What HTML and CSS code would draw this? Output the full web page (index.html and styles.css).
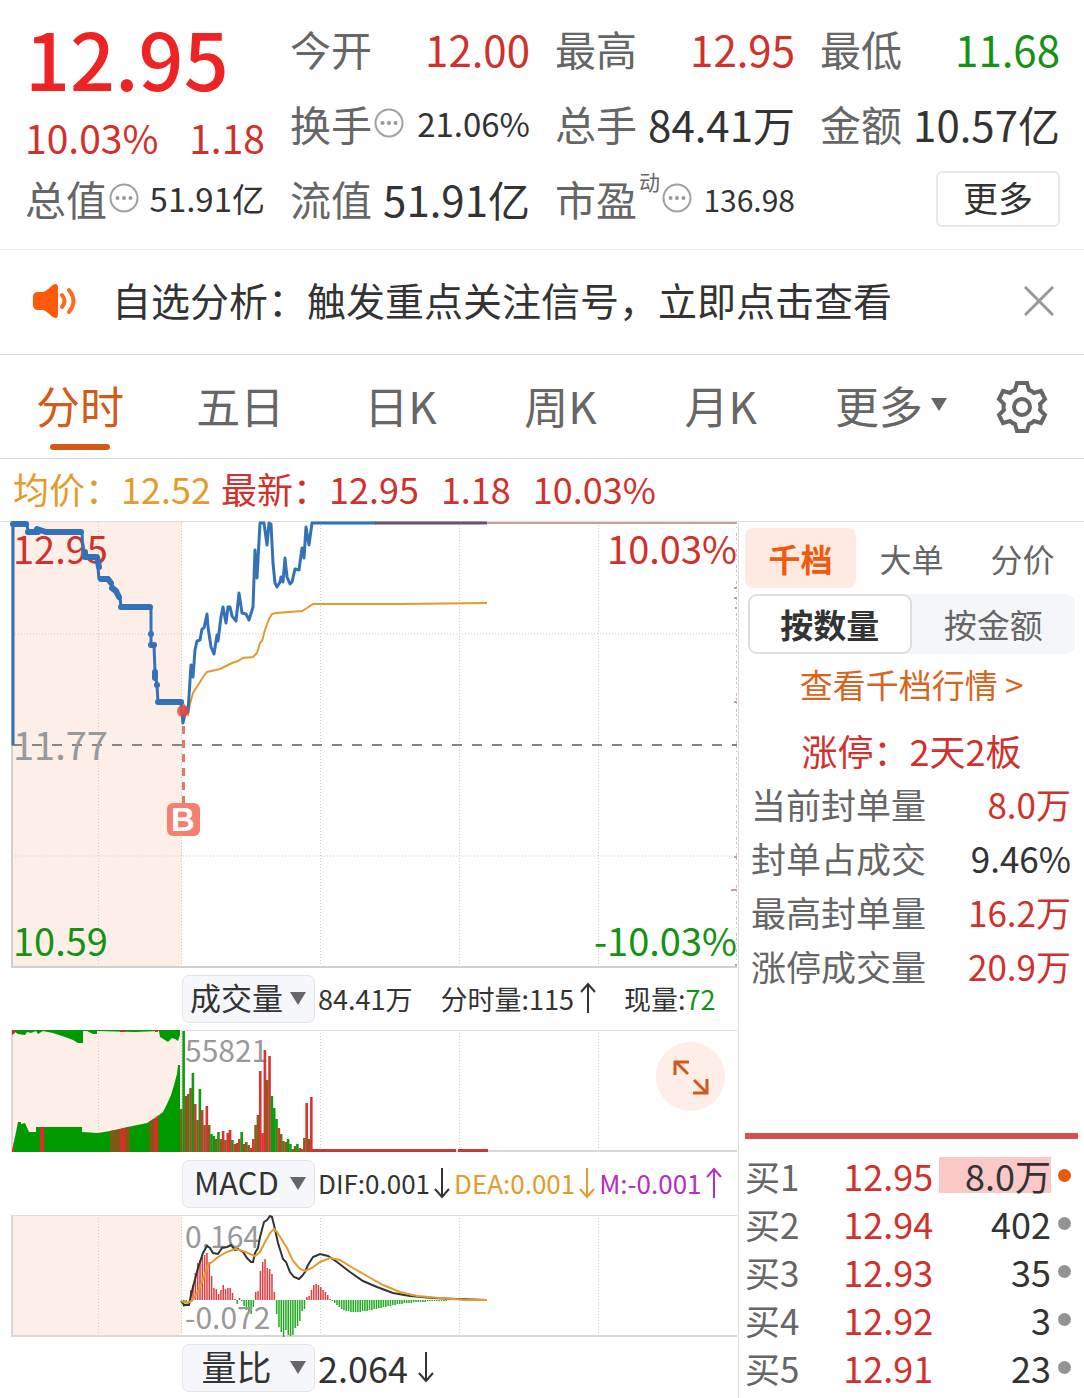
FILE: index.html
```html
<!DOCTYPE html>
<html lang="zh-CN">
<head>
    <meta charset="UTF-8">
    <meta name="viewport" content="width=device-width, initial-scale=1">
    <title>分时行情</title>
    <link rel="stylesheet" href="styles.css">
</head>
<body>
    <svg class="defs" aria-hidden="true">
        <symbol id="dots" viewBox="0 0 30 30">
            <circle cx="15" cy="15" r="13.5" fill="none" stroke="#a0a0a0" stroke-width="2"/>
            <g fill="#999"><circle cx="8.5" cy="15" r="2"/><circle cx="15" cy="15" r="2"/><circle cx="21.5" cy="15" r="2"/></g>
        </symbol>
        <symbol id="up" viewBox="0 0 16 32">
            <path d="M8 31V2M1 10L8 2L15 10" fill="none" stroke="currentColor" stroke-width="2"/>
        </symbol>
        <symbol id="down" viewBox="0 0 16 32">
            <path d="M8 1V30M1 22L8 30L15 22" fill="none" stroke="currentColor" stroke-width="2"/>
        </symbol>
    </svg>

    <header class="quote">
        <div class="price-box">
            <div class="price">12.95</div>
            <div class="change"><span>10.03%</span><span>1.18</span></div>
        </div>
        <div class="cell"><span class="label">今开</span><span class="value red">12.00</span></div>
        <div class="cell"><span class="label">最高</span><span class="value red">12.95</span></div>
        <div class="cell"><span class="label">最低</span><span class="value green">11.68</span></div>
        <div class="cell"><span class="label">换手</span><svg class="dots"><use href="#dots"/></svg><span class="value mid">21.06%</span></div>
        <div class="cell"><span class="label">总手</span><span class="value">84.41万</span></div>
        <div class="cell"><span class="label">金额</span><span class="value">10.57亿</span></div>
        <div class="cell"><span class="label">总值</span><svg class="dots"><use href="#dots"/></svg><span class="value mid">51.91亿</span></div>
        <div class="cell"><span class="label">流值</span><span class="value">51.91亿</span></div>
        <div class="cell"><span class="label">市盈</span><span class="sup">动</span><svg class="dots"><use href="#dots"/></svg><span class="value small">136.98</span></div>
        <div class="cell end"><button class="more-btn" type="button">更多</button></div>
    </header>

    <div class="notice">
        <svg class="speaker" viewBox="0 0 46 36" aria-hidden="true">
            <path d="M5 9H10C14 8 17 4 20 2Q25-1 25 5V31Q25 37 20 34C17 32 14 28 10 27H5Q0 27 0 22V14Q0 9 5 9Z" fill="#ff5a0a"/>
            <path d="M29 12Q34 18 29 24M36 7Q45 18 36 29" fill="none" stroke="#ff6a1f" stroke-width="4" stroke-linecap="round"/>
        </svg>
        <a class="notice-text" href="#">自选分析：触发重点关注信号，立即点击查看</a>
        <button class="icon-btn" type="button" aria-label="关闭">
            <svg class="close" viewBox="0 0 30 30"><path d="M1 1L29 29M29 1L1 29" stroke="#999" stroke-width="3"/></svg>
        </button>
    </div>

    <nav class="tabs">
        <button class="tab active" type="button">分时</button>
        <button class="tab" type="button">五日</button>
        <button class="tab" type="button">日K</button>
        <button class="tab" type="button">周K</button>
        <button class="tab" type="button">月K</button>
        <button class="tab tab-more" type="button">更多<i class="caret"></i></button>
        <button class="icon-btn setting" type="button" aria-label="设置">
            <svg class="gear" viewBox="-27 -27 54 54" fill="none" stroke="#666" stroke-width="4">
                <path d="M-5-24H5L7-17Q10-16 12-14L19-16L23-8L18-3Q19 0 18 3L23 8L19 16L12 14Q10 16 7 17L5 24H-5L-7 17Q-10 16-12 14L-19 16L-23 8L-18 3Q-19 0-18-3L-23-8L-19-16L-12-14Q-10-16-7-17Z"/>
                <circle r="8"/>
            </svg>
        </button>
    </nav>

    <div class="info">
        <span class="orange">均价：12.52</span>
        <span class="red">最新：12.95</span>
        <span class="red gap">1.18</span>
        <span class="red gap">10.03%</span>
    </div>

    <main class="main">
        <section class="charts">
            <!-- 分时走势 -->
            <svg class="chart" viewBox="0 0 738 446">
                <rect x="12" width="170" height="445" fill="#fdeee7"/>
                <path class="grid" d="M98.5 0V445M181.5 0V445M320.5 0V445M459.5 0V445M598.5 0V445M12 112H737M12 334H737"/>
                <path d="M12 0V445H737" fill="none" stroke="#d0d0d0" stroke-width="2"/>
                <path d="M736.5 0V445" stroke="#d9b3b3" stroke-dasharray="2 3 1 5 3 2"/>
                <path d="M734 66h3M734 76h3M735 86h2M734 180h3M734 335h3M731 368h6M735 443h2" stroke="#cf9a9a" stroke-width="2"/>
                <path d="M12 223H737" stroke="#858585" stroke-width="2" stroke-dasharray="10 10"/>
                <path d="M312 1H737" stroke="#d0a0a0" stroke-width="2"/>
                <path d="M375 1H487" stroke="#6b5078" stroke-width="3"/>
                <text class="axis red" x="13" y="42">12.95</text>
                <text class="axis red" x="737" y="42" text-anchor="end">10.03%</text>
                <text class="axis" x="13" y="238" fill="#999">11.77</text>
                <text class="axis green" x="13" y="434">10.59</text>
                <text class="axis green" x="737" y="434" text-anchor="end">-10.03%</text>
                <polyline class="avg" points="183,181 188,192 190,182 193,171 200,160 203,155 207,150 220,147 232,141 238,139 243,136 253,135 257,131 260,121 262,119 265,108 269,97 272,92 276,91 302,89 307,86 313,82 400,82 487,81"/>
                <polyline class="line" points="13,223 13,2 27,2 28,10 36,10 40,7 46,10 82,10 83,30 86,35 97,35 99,57 109,58 114,66 120,75 121,85 151,85 151,123 154,123 155,150 157,163 158,180 181,180 183,201 186,186 188,190 191,143 193,155 195,128 197,119 200,118 202,107 204,106 207,92 208,105 211,125 214,132 217,113 218,119 221,95 223,85 226,101 228,85 230,85 232,94 236,99 239,71 242,91 246,92 249,98 253,85 255,28 257,56 260,1 264,1 267,23 269,1 271,2 273,41 275,61 277,65 280,60 281,55 283,60 285,36 287,55 290,62 292,60 295,47 299,48 302,26 304,36 306,5 309,23 312,1 376,1"/>
                <path class="bold-line" d="M13 2H26M28 10H38M37 7L46 10H81M85 30V35H97L99 45M101 57H108L111 61M112 66L116 69L119 75M121 85H150M151 112v.1M151 123H154M155 150v6M157 163v.1M158 180H181"/>
                <path d="M183.500 204V281" stroke="#e07a6c" stroke-width="3" stroke-dasharray="8 6"/>
                <circle cx="183" cy="189" r="6" fill="#e84a3f" opacity=".85"/>
                <rect x="167" y="281" width="33" height="33" rx="6" fill="#f58070"/>
                <text class="mark" x="183" y="309" text-anchor="middle">B</text>
            </svg>

            <div class="bar">
                <label class="picker"><select aria-label="指标一"><option>成交量</option></select></label>
                <span class="stat vol wide">84.41万</span>
                <span class="stat vol wide">分时量:115<svg class="arrow"><use href="#up"/></svg></span>
                <span class="stat vol">现量:<b class="green">72</b></span>
            </div>

            <div class="chart-wrap">
                <svg class="chart" viewBox="0 0 738 122">
                    <clipPath id="auction"><path d="M12 121L16 102L18 92H21V94L25 93L29 102H36V97H82V102L98 103L110 101L120 99L128 97L147 93L155 88L163 82L167 74L171 65L174 55L177 44L178 35H180V122H12Z"/></clipPath>
                    <rect x="12" width="170" height="121" fill="#fdeee7"/>
                    <path class="grid" d="M98.500 0V121M181.500 0V121M320.500 0V121M459.500 0V121M598.500 0V121"/>
                    <path d="M12 .5H737" stroke="#ddd"/>
                    <path d="M12 0V121H737" fill="none" stroke="#d8d8d8" stroke-width="2"/>
                    <path d="M12 0V4L15 2L18 4L25 5L27 2L31 3L36 1L38 4L43 1L53 3L65 7L73 10L78 13H83V1H87L93 4H97V1L135 2L159 1L160 7L165 10L168 12L172 8L175 9L178 11L180 5V0Z" fill="#009a00"/>
                    <path d="M12 0H15V3L12 5ZM120 0H125V2H120ZM155 0H158V2H155Z" fill="#c8322d"/>
                    <g clip-path="url(#auction)">
                        <rect x="12" width="170" height="122" fill="#009a00"/>
                        <path d="M110 0H130V122H110ZM149 0H154V122H149Z" fill="#7a5a14"/>
                        <path d="M40 0H44V122H40ZM120 0H125V122H120ZM154 0H158V122H154ZM12 0H14V122H12Z" fill="#dc2d26"/>
                    </g>
                    <text class="scale" x="185" y="32">55821</text>
                    <g id="volume"></g>
                    <path d="M312 120.500H456M458 120.500H488" stroke="#c03a36" stroke-width="3"/>
                </svg>
                <button class="expand" type="button" aria-label="全屏">
                    <svg viewBox="0 0 36 36" fill="none" stroke="#cf5a1c" stroke-width="3"><path d="M2 16V3H16M3 3L15 15M34 20V34H20M33 33L21 21"/></svg>
                </button>
            </div>

            <div class="bar bar-macd">
                <label class="picker"><select aria-label="指标二"><option>MACD</option></select></label>
                <span class="stat">DIF:0.001<svg class="arrow"><use href="#down"/></svg></span>
                <span class="stat orange">DEA:0.001<svg class="arrow"><use href="#down"/></svg></span>
                <span class="stat purple">M:-0.001<svg class="arrow"><use href="#up"/></svg></span>
            </div>

            <svg class="chart" viewBox="0 0 738 122">
                <rect x="12" width="170" height="121" fill="#fdeee7"/>
                <path class="grid" d="M98.500 0V121M181.500 0V121M320.500 0V121M459.500 0V121M598.500 0V121"/>
                <path d="M12 .5H737" stroke="#ddd"/>
                <path d="M12 0V121H737" fill="none" stroke="#d8d8d8" stroke-width="2"/>
                <g id="macd"></g>
                <text class="scale" x="185" y="33">0.164</text>
                <text class="scale" x="185" y="114">-0.072</text>
                <polyline class="dif" points="181,86 184,90 189,90 191,80 193,72 198,53 203,38 207,31 210,33 213,38 218,39 222,33 227,32 231,30 235,35 238,34 243,37 247,43 251,47 253,47 255,38 258,33 260,22 264,7 267,5 270,1 272,2 274,10 278,28 283,44 286,47 290,57 294,62 299,64 302,61 305,57 308,50 313,42 320,39 328,41 337,47 350,57 363,66 377,72 393,78 410,81 433,83 457,84 487,85"/>
                <polyline class="avg" points="181,86 187,88 192,86 197,78 202,67 208,50 212,47 218,42 227,37 235,34 243,36 250,39 255,41 260,37 265,27 270,18 274,14 277,17 282,25 287,33 293,46 300,54 305,56 312,53 320,47 330,43 340,45 353,53 367,61 383,70 400,77 417,81 440,83 467,85 487,85"/>
            </svg>

            <div class="bar">
                <label class="picker"><select class="large" aria-label="指标三"><option>量比</option></select></label>
                <span class="stat big">2.064<svg class="arrow big-arrow"><use href="#down"/></svg></span>
            </div>
        </section>

        <aside class="panel">
            <div class="panel-tabs">
                <button class="panel-tab on" type="button">千档</button>
                <button class="panel-tab" type="button">大单</button>
                <button class="panel-tab" type="button">分价</button>
            </div>
            <div class="switch">
                <button class="switch-item on" type="button">按数量</button>
                <button class="switch-item" type="button">按金额</button>
            </div>
            <a class="link" href="#">查看千档行情 &gt;</a>
            <div class="limit">涨停：2天2板</div>
            <dl class="stats">
                <div><dt>当前封单量</dt><dd class="red">8.0万</dd></div>
                <div><dt>封单占成交</dt><dd>9.46%</dd></div>
                <div><dt>最高封单量</dt><dd class="red">16.2万</dd></div>
                <div><dt>涨停成交量</dt><dd class="red">20.9万</dd></div>
            </dl>
            <table class="orders">
                <tr><th scope="row">买1</th><td class="red">12.95</td><td class="qty"><span class="hot">8.0万</span></td><td class="dot-cell"><i class="dot dot-hot"></i></td></tr>
                <tr><th scope="row">买2</th><td class="red">12.94</td><td class="qty"><span>402</span></td><td class="dot-cell"><i class="dot"></i></td></tr>
                <tr><th scope="row">买3</th><td class="red">12.93</td><td class="qty"><span>35</span></td><td class="dot-cell"><i class="dot"></i></td></tr>
                <tr><th scope="row">买4</th><td class="red">12.92</td><td class="qty"><span>3</span></td><td class="dot-cell"><i class="dot"></i></td></tr>
                <tr><th scope="row">买5</th><td class="red">12.91</td><td class="qty"><span>23</span></td><td class="dot-cell"><i class="dot"></i></td></tr>
            </table>
        </aside>
    </main>
    <script src="charts.js"></script>
</body>
</html>
```
FILE: styles.css
```css
* {
    box-sizing: border-box;
}
body {
    margin: 0;
    background: #fff;
    color: #333;
    font-family: "Noto Sans CJK SC", sans-serif;
    line-height: 1;
}
button, select {
    margin: 0;
    padding: 0;
    border: 0;
    background: none;
    color: inherit;
    font: inherit;
}
a {
    color: inherit;
    text-decoration: none;
}
.defs {
    display: none;
}
.red { color: #d0312d; fill: #d0312d; }
.green { color: #149214; fill: #149214; }
.orange { color: #e39b2d; }
.purple { color: #b32fc0; }

/* 顶部报价 */
.quote {
    display: grid;
    grid-template-columns: repeat(4, 1fr);
    grid-auto-rows: 75px;
    column-gap: 25px;
    padding: 11px 24px 13px 25px;
    border-bottom: 1px solid #eee;
}
.price-box {
    grid-row: span 2;
    white-space: nowrap;
}
.price {
    height: 100px;
    line-height: 92px;
    font-size: 79px;
    font-weight: 500;
    color: #ee2424;
}
.change {
    display: flex;
    justify-content: space-between;
    font-size: 39px;
    line-height: 52px;
    color: #d0312d;
}
.cell {
    display: flex;
    align-items: center;
    white-space: nowrap;
}
.end {
    justify-content: flex-end;
}
.label {
    font-size: 41px;
    color: #666;
}
.value {
    margin-left: auto;
    font-size: 42px;
}
.mid { font-size: 33px; }
.small { font-size: 30px; }
.sup {
    align-self: flex-start;
    padding: 10px 2px 0;
    font-size: 21px;
    color: #666;
}
.dots {
    flex: none;
    width: 30px;
    height: 30px;
    margin: 0 0 2px 2px;
}
.sup + .dots {
    margin-left: 0;
}
.more-btn {
    width: 124px;
    height: 56px;
    padding-bottom: 4px;
    border: 2px solid #e8e8e8;
    border-radius: 6px;
    font-size: 35px;
}

/* 提示条 */
.notice {
    display: flex;
    align-items: center;
    height: 105px;
    padding: 0 30px 2px 33px;
    border-bottom: 1px solid #d8d8d8;
}
.speaker {
    width: 46px;
    height: 36px;
}
.notice-text {
    flex: 1;
    padding: 0 0 4px 33px;
    font-size: 39px;
}
.icon-btn {
    display: flex;
}
.close {
    width: 30px;
    height: 30px;
}

/* 周期切换 */
.tabs {
    display: flex;
    align-items: center;
    height: 104px;
    padding-right: 35px;
    border-bottom: 1px solid #d8d8d8;
}
.tab {
    position: relative;
    flex: 160;
    height: 100%;
    padding-bottom: 4px;
    font-size: 44px;
    color: #666;
}
.tab-more {
    flex: 180;
    display: flex;
    align-items: center;
    justify-content: center;
    gap: 8px;
}
.tab.active {
    color: #d35a18;
}
.tab.active::after {
    content: "";
    position: absolute;
    left: 50%;
    bottom: 8px;
    width: 60px;
    height: 6px;
    margin-left: -30px;
    border-radius: 3px;
    background: #d35a18;
}
.caret {
    border: 8px solid transparent;
    border-top: 13px solid #666;
    border-bottom: 0;
}
.setting {
    margin-left: 14px;
}
.gear {
    width: 54px;
    height: 54px;
}

.info {
    display: flex;
    align-items: center;
    gap: 10px;
    height: 62px;
    padding: 0 0 4px 13px;
    font-size: 36px;
}
.gap {
    margin-left: 12px;
}

/* 图表区 */
.main {
    display: grid;
    grid-template-columns: 738fr 346fr;
    border-top: 1px solid #ddd;
}
.charts {
    min-width: 0;
}
.chart {
    display: block;
    width: 100%;
    overflow: visible;
}
.grid {
    fill: none;
    stroke: #ccc;
    stroke-dasharray: 1 2;
}
.axis { font-size: 38px; }
.scale {
    font-size: 30px;
    fill: #999;
}
.mark {
    font: bold 33px "Liberation Sans", sans-serif;
    fill: #fff;
}
.line {
    fill: none;
    stroke: #3372b8;
    stroke-width: 3;
    stroke-linejoin: round;
}
.bold-line {
    fill: none;
    stroke: #3372b8;
    stroke-width: 6;
    stroke-linecap: round;
    stroke-linejoin: round;
}
.avg {
    fill: none;
    stroke: #e39b2d;
    stroke-width: 2;
}
.dif {
    fill: none;
    stroke: #333;
    stroke-width: 2;
}
.bar {
    display: flex;
    align-items: center;
    gap: 4px;
    height: 62px;
    padding-left: 182px;
}
.bar-macd {
    height: 63px;
}
.picker {
    position: relative;
    margin-right: -1px;
}
.picker::after {
    content: "";
    position: absolute;
    right: 9px;
    top: 17px;
    border: 8px solid transparent;
    border-top: 13px solid #666;
    border-bottom: 0;
    pointer-events: none;
}
.picker select {
    appearance: none;
    width: 133px;
    height: 48px;
    padding: 0 24px 4px 0;
    border: 1px solid #e4e4e8;
    border-radius: 7px;
    background: #f6f7fa;
    font-size: 31px;
    line-height: 42px;
    text-align-last: center;
}
.picker .large {
    font-size: 35px;
}
.stat {
    display: flex;
    align-items: center;
    gap: 4px;
    padding-bottom: 2px;
    white-space: nowrap;
    font-size: 26px;
}
.vol {
    gap: 6px;
    font-size: 27px;
}
.stat b {
    margin-left: -6px;
    font-weight: 400;
}
.wide {
    margin-right: 24px;
}
.big {
    gap: 8px;
    font-size: 36px;
}
.arrow {
    flex: none;
    width: 16px;
    height: 32px;
}
.big-arrow {
    width: 20px;
}
.chart-wrap {
    position: relative;
}
.expand {
    position: absolute;
    right: 13px;
    top: 12px;
    display: flex;
    align-items: center;
    justify-content: center;
    width: 69px;
    height: 69px;
    border-radius: 50%;
    background: #feeee7;
}
.expand svg {
    width: 36px;
    height: 36px;
}

/* 右侧盘口 */
.panel {
    display: flex;
    flex-direction: column;
    padding: 6px 6px 8px;
    border-left: 1px solid #ddd;
}
.panel-tabs {
    display: grid;
    grid-template-columns: repeat(3, 1fr);
}
.panel-tab {
    height: 60px;
    border-radius: 8px;
    font-size: 32px;
    color: #666;
}
.panel-tab.on {
    background: #feeae1;
    color: #f0590f;
    font-weight: 700;
}
.switch {
    display: grid;
    grid-template-columns: 1fr 1fr;
    margin: 6px 3px 0;
    border-radius: 9px;
    background: #f5f6fa;
}
.switch-item {
    height: 60px;
    font-size: 33px;
    color: #666;
}
.switch-item.on {
    border: 2px solid #ddd;
    border-radius: 9px;
    background: #fff;
    color: #333;
    font-weight: 700;
}
.link {
    line-height: 60px;
    text-align: center;
    font-size: 33px;
    color: #d9641e;
}
.limit {
    padding-top: 9px;
    line-height: 54px;
    text-align: center;
    font-size: 36px;
    color: #d0312d;
}
.stats {
    margin: 0;
    padding: 0 7px 0 6px;
}
.stats div {
    display: flex;
    justify-content: space-between;
    line-height: 54px;
    font-size: 35px;
}
.stats dt {
    color: #666;
}
.stats dd {
    margin: 0;
}
.orders {
    width: 100%;
    margin-top: auto;
    border-top: 6px solid #d94f4f;
    border-spacing: 0;
    padding-top: 12px;
    font-size: 36px;
    white-space: nowrap;
}
.orders th, .orders td {
    height: 48px;
    padding: 0;
    text-align: right;
}
.orders .red {
    width: 134px;
}
.orders th {
    text-align: left;
    font-size: 35px;
    font-weight: 400;
    color: #666;
}
.orders .qty {
    width: 118px;
}
.qty span {
    display: block;
    margin-left: 6px;
    line-height: 36px;
}
.qty .hot {
    background: #fbc8c8;
}
.orders .dot-cell {
    width: 27px;
}
.dot {
    display: block;
    width: 13px;
    height: 13px;
    margin-left: 7px;
    border-radius: 50%;
    background: #929297;
}
.dot-hot {
    background: #e8590c;
}
```
FILE: charts.js
```js
var STEP = 2.322; // 每分钟柱宽
var NS = "http://www.w3.org/2000/svg";
var colors = { r: "#d93430", g: "#0f9a12", m: "#80601a" };

// 颜色 + 柱高
var volume = "m43 g121 m56 m58 m64 g79 r48 m32 g63 r42 m27 r46 m27 g18 g16 m13 g20 m13 r21 m12 r19 r22 g12 r8 m9 r13 g20 m8 m10 m7 r4 r13 m27 m37 r81 r19 r102 m72 r96 g56 g44 g33 r24 m18 m11 m10 g13 g8 m3 m6 g8 m4 r3 m14 r49 m13 r55 r3".split(" ");

var macd = [-7, -3, 0, 10, 15, 27, 37, 40, 43, 45, 47, 38, 24, 12, 11, 6, 10, 15, 11, 12, 12, 7, 1, -4, 2, -1, -6, -10, -13, -14, -7, 8, 9, 29, 38, 41, 32, 31, 26, 8, -14, -27, -32, -37, -30, -35, -36, -35, -28, -26, -21, -11, -9, 3, 4, 10, 15, 16, 15, 13, 10, 8, 5, 1, -1, -3, -5, -7, -9, -10, -11, -11, -12, -12, -12, -12, -12, -11, -11, -11, -10, -10, -9, -9, -8, -8, -7, -7, -6, -6, -5, -5, -4, -4, -4, -3, -3, -3, -3, -2, -2, -2, -2, -2, -2, -1, -1, -1, -1, -1, -1, -1, -1, -1];

function addBar(group, x, y, width, height, color) {
    var rect = document.createElementNS(NS, "rect");
    rect.setAttribute("x", x);
    rect.setAttribute("y", y);
    rect.setAttribute("width", width);
    rect.setAttribute("height", height);
    rect.setAttribute("fill", color);
    group.appendChild(rect);
}

var volumeGroup = document.getElementById("volume");
volume.forEach(function (item, i) {
    var height = Number(item.slice(1));
    addBar(volumeGroup, 180 + i * STEP, 122 - height, 2.6, height, colors[item[0]]);
});

var macdGroup = document.getElementById("macd");
macd.forEach(function (value, i) {
    var height = Math.abs(value);
    addBar(macdGroup, 183 + i * STEP, value > 0 ? 85 - height : 85, 1.5, height, value > 0 ? "#e23b3b" : "#1faa1f");
});
```
